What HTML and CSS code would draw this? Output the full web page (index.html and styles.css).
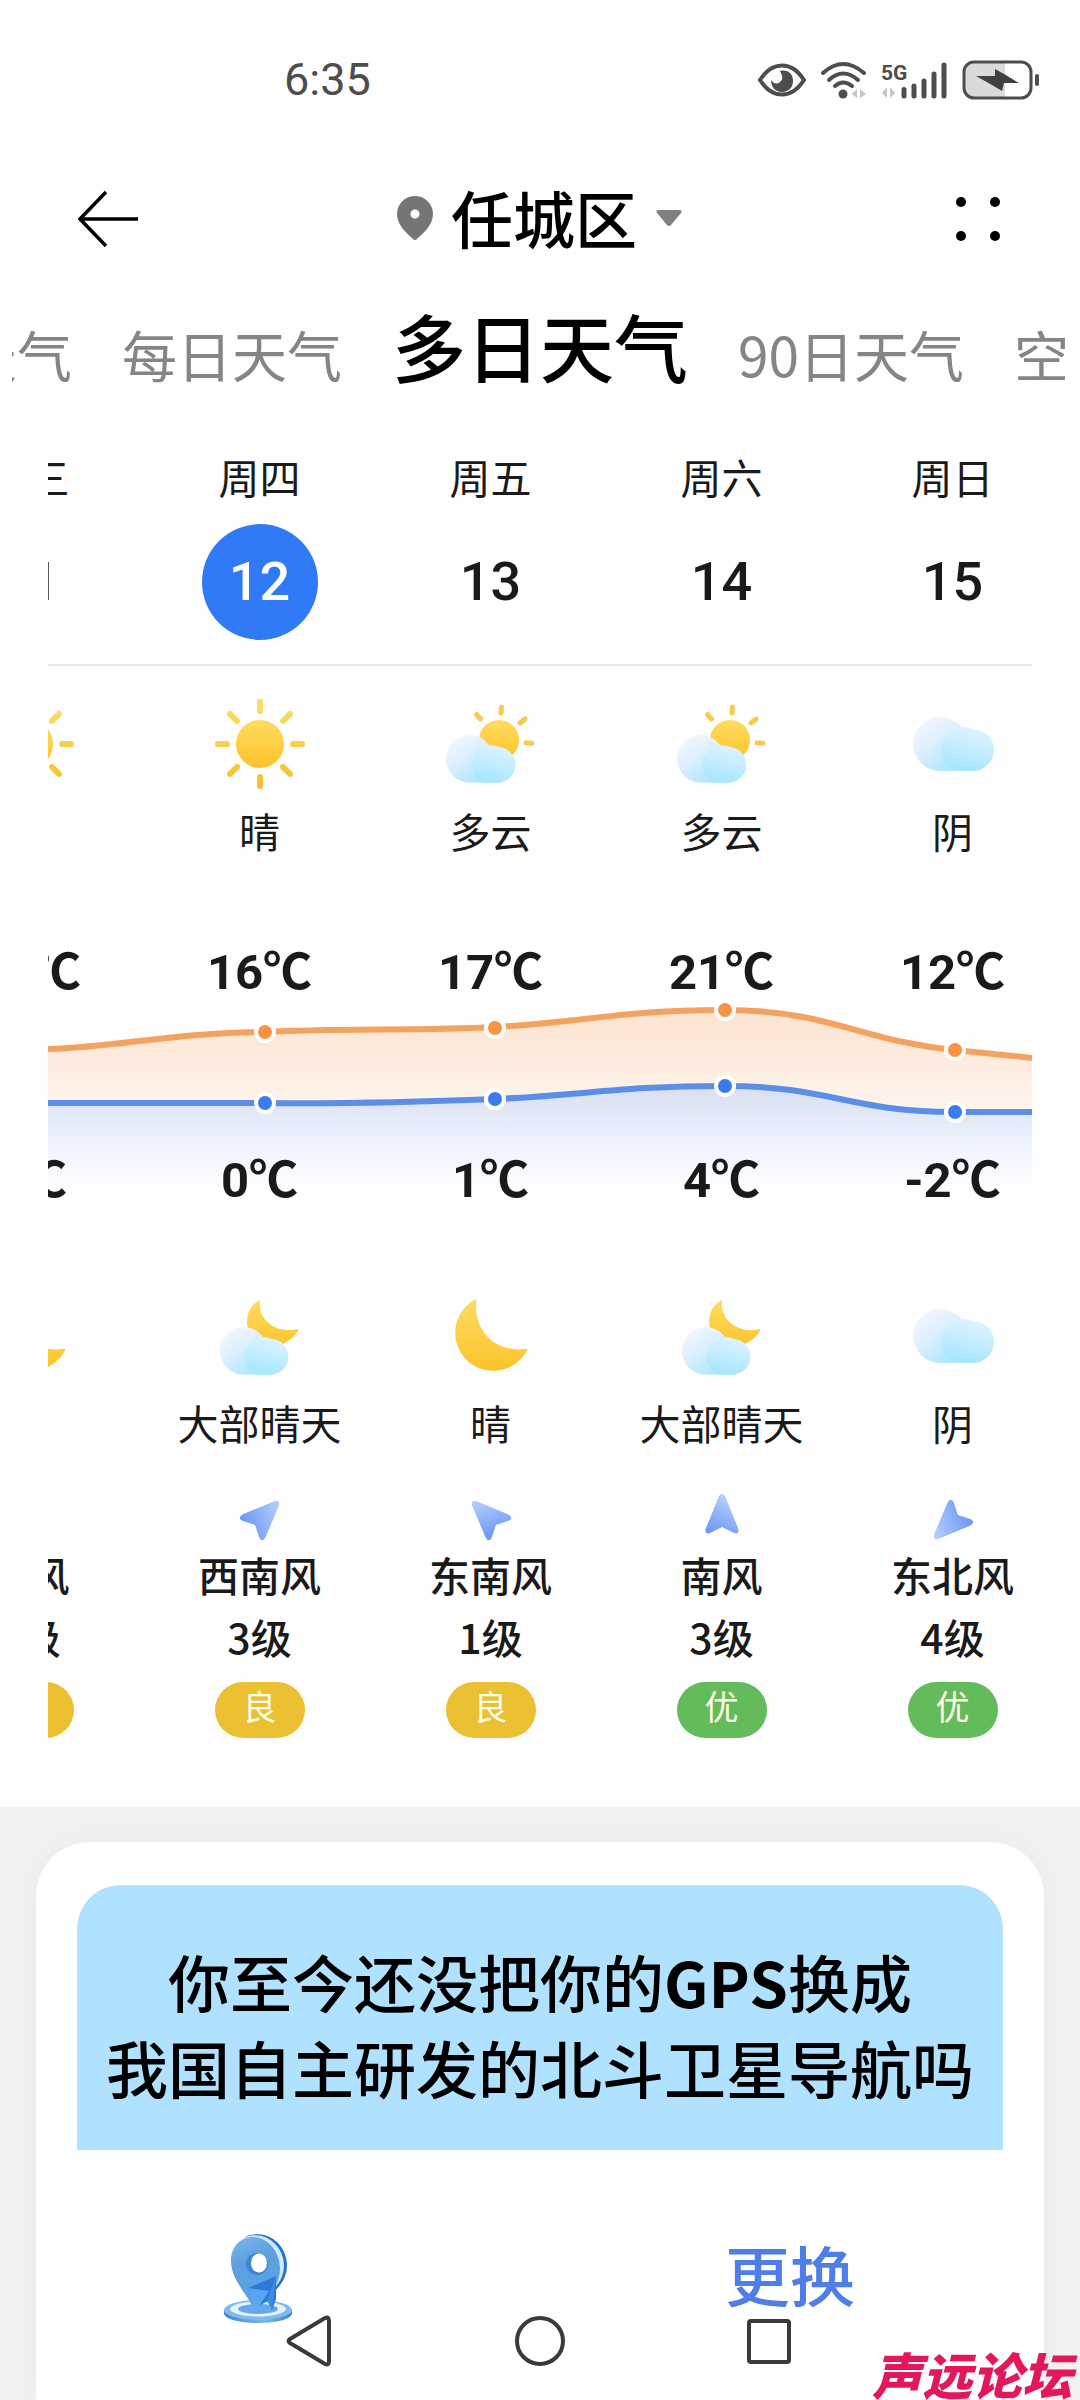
FILE: index.html
```html
<!DOCTYPE html>
<html lang="zh-CN">
<head>
    <meta charset="UTF-8">
    <meta name="viewport" content="width=device-width, initial-scale=1.0">
    <title>多日天气</title>
    <link rel="stylesheet" href="styles.css">
</head>
<body>
    <!-- Ícones reutilizáveis -->
    <svg class="defs" width="0" height="0" aria-hidden="true">
        <defs>
            <linearGradient id="sunFill" gradientUnits="userSpaceOnUse" x1="48" y1="4" x2="48" y2="92">
                <stop offset="0" stop-color="#fbdf6b"/>
                <stop offset="1" stop-color="#f8bf2c"/>
            </linearGradient>
            <linearGradient id="ballFill" x1="0" y1="0" x2="0" y2="1">
                <stop offset="0" stop-color="#fedc60"/>
                <stop offset="1" stop-color="#fcc32b"/>
            </linearGradient>
            <linearGradient id="cloudBig" x1="0.1" y1="0.1" x2="0.8" y2="1">
                <stop offset="0" stop-color="#f3f7ff"/>
                <stop offset="0.4" stop-color="#dceffe"/>
                <stop offset="1" stop-color="#a2e4ff"/>
            </linearGradient>
            <linearGradient id="cloudSmall" x1="0.7" y1="0" x2="0.4" y2="1">
                <stop offset="0" stop-color="#e0f4ff"/>
                <stop offset="1" stop-color="#a6e6ff"/>
            </linearGradient>
            <linearGradient id="windFill" x1="0.7" y1="0" x2="0.3" y2="1">
                <stop offset="0" stop-color="#bcd3fb"/>
                <stop offset="1" stop-color="#6f9af6"/>
            </linearGradient>
        </defs>
        <symbol id="cloud" viewBox="0 0 96 96">
            <path fill="url(#cloudBig)" d="M35 75A27 27 0 1 1 61 40L70 75Z"/>
            <path fill="url(#cloudSmall)" d="M68 33A21 21 0 0 1 68 75H50A21 21 0 0 1 68 33Z"/>
        </symbol>
        <symbol id="sun" viewBox="0 0 96 96">
            <circle cx="48" cy="48" r="24" fill="url(#ballFill)"/>
            <path stroke="url(#sunFill)" stroke-width="6" stroke-linecap="round" d="M48 5.500V15M48.010 81V90M6 48H15M81 48H90M18 18L25 25M78 18L71 25M18 78L25 71M78 78L71 71"/>
        </symbol>
        <symbol id="sun-cloud" viewBox="0 0 96 96">
            <circle cx="56" cy="44" r="20" fill="url(#ballFill)"/>
            <path stroke="#f7cb50" stroke-width="5" stroke-linecap="round" d="M58.500 11L58 17M33.500 18.500L37.500 23M82 23L77 27M83 46.800L89 47.300"/>
            <path fill="url(#cloudBig)" d="M26.500 86.500A23.700 23.700 0 1 1 49 55L58 86.500Z"/>
            <path fill="url(#cloudSmall)" d="M56 51A17.800 17.800 0 0 1 56 86.500H40A18 18 0 0 1 56 51Z"/>
        </symbol>
        <symbol id="moon" viewBox="0 0 96 96">
            <path fill="url(#ballFill)" d="M31 12A38 38 0 1 0 83 64Q86 60 82 61C52 65 30 42 33.500 13Q34 10 31 12Z"/>
        </symbol>
        <symbol id="moon-cloud" viewBox="0 0 96 96">
            <path fill="url(#ballFill)" d="M46 13C35 20 33 32 37 46L58 62L73 55Q82 50 86 43Q87 40 83 41.500C64 45 46 32 48 14Q48 11 46 13Z"/>
            <path fill="url(#cloudBig)" d="M31.500 86.500A23.700 23.700 0 1 1 54 55L62 86.500Z"/>
            <path fill="url(#cloudSmall)" d="M60 51A17.800 17.800 0 0 1 60 86.500H44A18 18 0 0 1 60 51Z"/>
        </symbol>
        <symbol id="arrow" viewBox="0 0 48 48">
            <path fill="url(#windFill)" d="M21 4Q24 0 27 4L40 36Q42 43 36 41L24 35L12 41Q6 43 8 36Z"/>
        </symbol>
    </svg>

    <div class="page">
        <!-- Barra de status -->
        <div class="status-bar">
            <span class="clock">6:35</span>
            <div class="status-icons">
                <svg width="50" height="40" viewBox="0 0 50 40">
                    <path d="M3 20C10 9 17 5.500 25 5.500S40 9 47 20C40 31 33 34.500 25 34.500S10 31 3 20Z" fill="none" stroke="#4d4d4d" stroke-width="4"/>
                    <path d="M23 11C31 9 36 14 36 21C36 28 31 32 25 32C18 32 14 27 14 20C16 23 19 25 23 22C27 19 25 15 23 11Z" fill="#4d4d4d"/>
                </svg>
                <svg width="48" height="40" viewBox="0 0 48 40">
                    <g fill="none" stroke="#4d4d4d" stroke-width="4" stroke-linecap="round">
                        <path d="M3 13Q23 -5 44 13"/>
                        <path d="M9 20Q23 7 38 20"/>
                        <path d="M15 26Q23 19 32 26"/>
                    </g>
                    <circle cx="23" cy="34" r="4.500" fill="#4d4d4d"/>
                    <path d="M32 34L37 29V38ZM46 34L40 38V29Z" fill="#c4c4c4"/>
                </svg>
                <svg width="68" height="40" viewBox="0 0 68 40">
                    <text x="0" y="20" class="net">5G</text>
                    <path d="M1 33L6 27V38ZM14 33L9 38V27Z" fill="#c4c4c4"/>
                    <path d="M23 29.500V36M33 26V36M43 21V36M53 14V36M63 5V36" stroke="#4d4d4d" stroke-width="5" stroke-linecap="round"/>
                </svg>
                <svg width="78" height="40" viewBox="0 0 78 40">
                    <path d="M11 3H43V37H11Q3 37 3 29V11Q3 3 11 3Z" fill="#dadada"/>
                    <rect x="2" y="2" width="67" height="36" rx="10" fill="none" stroke="#4d4d4d" stroke-width="3"/>
                    <path d="M33 9L42 14L57 23H42L40 31L30 25L14 16L33 16Z" fill="#404040"/>
                    <path d="M75 16V24" stroke="#4d4d4d" stroke-width="4" stroke-linecap="round"/>
                </svg>
            </div>
        </div>

        <!-- Cabeçalho -->
        <header class="header">
            <button class="icon-btn" aria-label="返回">
                <svg width="60" height="60" viewBox="0 0 60 60"><path d="M60 30H3M28 3L2 30L28 57" fill="none" stroke="#000" stroke-width="3.500"/></svg>
            </button>
            <button class="place">
                <svg width="36" height="48" viewBox="0 0 36 48"><path fill="#757575" fill-rule="evenodd" d="M18 3A18 18 0 0 0 0 21C0 33 11 41 16 46Q18 48 20 46C25 41 36 33 36 21A18 18 0 0 0 18 3ZM18 16.500A4.500 4.500 0 1 1 18 25.500A4.500 4.500 0 1 1 18 16.500Z"/></svg>
                <h1>任城区</h1>
                <svg width="28" height="20" viewBox="0 0 28 20"><path fill="#808080" d="M4 3H24Q28 3 26 6L16 18Q14 20 12 18L2 6Q0 3 4 3Z"/></svg>
            </button>
            <button class="icon-btn" aria-label="更多">
                <svg width="60" height="48" viewBox="0 0 60 48"><circle cx="19" cy="7" r="5"/><circle cx="53" cy="7" r="5"/><circle cx="19" cy="41" r="5"/><circle cx="53" cy="41" r="5"/></svg>
            </button>
        </header>

        <nav class="tabs">
            <a href="#">天气</a>
            <a href="#">每日天气</a>
            <a href="#" class="active">多日天气</a>
            <a href="#">90日天气</a>
            <a href="#">空气</a>
        </nav>

        <!-- Previsão -->
        <main class="forecast">
            <div class="row dates">
                <div class="day"><span>周三</span><b>11</b></div>
                <div class="day today"><span>周四</span><b>12</b></div>
                <div class="day"><span>周五</span><b>13</b></div>
                <div class="day"><span>周六</span><b>14</b></div>
                <div class="day"><span>周日</span><b>15</b></div>
            </div>

            <div class="row weather">
                <div class="day"><svg><use href="#sun"/></svg><span>晴</span></div>
                <div class="day"><svg><use href="#sun"/></svg><span>晴</span></div>
                <div class="day"><svg><use href="#sun-cloud"/></svg><span>多云</span></div>
                <div class="day"><svg><use href="#sun-cloud"/></svg><span>多云</span></div>
                <div class="day"><svg><use href="#cloud"/></svg><span>阴</span></div>
            </div>

            <!-- Gráfico de temperatura -->
            <div class="temps">
                <svg class="chart" viewBox="0 0 984 268" preserveAspectRatio="none">
                    <defs>
                        <linearGradient id="highArea" gradientUnits="userSpaceOnUse" x1="0" y1="67" x2="0" y2="180">
                            <stop offset="0" stop-color="#fce3d0"/>
                            <stop offset="1" stop-color="#fff7f1"/>
                        </linearGradient>
                        <linearGradient id="lowArea" gradientUnits="userSpaceOnUse" x1="0" y1="143" x2="0" y2="248">
                            <stop offset="0" stop-color="#d8dff0"/>
                            <stop offset="0.500" stop-color="#ecf1fd"/>
                            <stop offset="1" stop-color="#fefefe"/>
                        </linearGradient>
                    </defs>
                    <path fill="url(#highArea)" d="M0 106C70 104 130 89 217 89C290 85 370 88 447 84C540 79 570 67 677 67C782 67 812 98 907 107L984 115V200H0Z"/>
                    <path fill="url(#lowArea)" d="M0 160H217C300 161 370 159 447 156C540 152 570 143 677 143C782 143 802 169 907 169H984V250H0Z"/>
                    <path class="line high" d="M0 106C70 104 130 89 217 89C290 85 370 88 447 84C540 79 570 67 677 67C782 67 812 98 907 107L984 115"/>
                    <path class="line low" d="M0 160H217C300 161 370 159 447 156C540 152 570 143 677 143C782 143 802 169 907 169H984"/>
                    <g class="dot high-dot">
                        <circle cx="217" cy="89" r="9"/>
                        <circle cx="447" cy="85" r="9"/>
                        <circle cx="677" cy="67" r="9"/>
                        <circle cx="907" cy="107" r="9"/>
                    </g>
                    <g class="dot low-dot">
                        <circle cx="217" cy="160" r="9"/>
                        <circle cx="447" cy="156" r="9"/>
                        <circle cx="677" cy="143" r="9"/>
                        <circle cx="907" cy="169" r="9"/>
                    </g>
                </svg>
                <div class="row values">
                    <div class="day"><b>14℃</b><b>0℃</b></div>
                    <div class="day"><b>16℃</b><b>0℃</b></div>
                    <div class="day"><b>17℃</b><b>1℃</b></div>
                    <div class="day"><b>21℃</b><b>4℃</b></div>
                    <div class="day"><b>12℃</b><b>-2℃</b></div>
                </div>
            </div>

            <div class="row weather night">
                <div class="day"><svg><use href="#moon"/></svg><span>晴</span></div>
                <div class="day"><svg><use href="#moon-cloud"/></svg><span>大部晴天</span></div>
                <div class="day"><svg><use href="#moon"/></svg><span>晴</span></div>
                <div class="day"><svg><use href="#moon-cloud"/></svg><span>大部晴天</span></div>
                <div class="day"><svg><use href="#cloud"/></svg><span>阴</span></div>
            </div>

            <div class="row wind">
                <div class="day"><svg><use href="#arrow"/></svg><span>南风</span><span>3级</span><em class="good">良</em></div>
                <div class="day"><svg class="ne"><use href="#arrow"/></svg><span>西南风</span><span>3级</span><em class="good">良</em></div>
                <div class="day"><svg class="nw"><use href="#arrow"/></svg><span>东南风</span><span>1级</span><em class="good">良</em></div>
                <div class="day"><svg><use href="#arrow"/></svg><span>南风</span><span>3级</span><em class="best">优</em></div>
                <div class="day"><svg class="sw"><use href="#arrow"/></svg><span>东北风</span><span>4级</span><em class="best">优</em></div>
            </div>
        </main>

        <!-- Anúncio -->
        <section class="promo">
            <div class="card">
                <p class="banner">你至今还没把你的<strong>GPS</strong>换成<br>我国自主研发的北斗卫星导航吗</p>
                <div class="actions">
                    <svg width="72" height="90" viewBox="0 0 72 90">
                        <defs>
                            <linearGradient id="pinFill" x1="0" y1="0" x2="0.3" y2="1">
                                <stop offset="0" stop-color="#7fb9ee"/>
                                <stop offset="0.4" stop-color="#5e9fde"/>
                                <stop offset="1" stop-color="#5aa2ea"/>
                            </linearGradient>
                            <linearGradient id="baseFill" x1="0" y1="0" x2="1" y2="0">
                                <stop offset="0" stop-color="#4386cf"/>
                                <stop offset="0.6" stop-color="#79b6ef"/>
                                <stop offset="1" stop-color="#4183ca"/>
                            </linearGradient>
                        </defs>
                        <path fill="url(#baseFill)" d="M1 77V81C5 93 65 93 69 81V77Z"/>
                        <ellipse cx="35" cy="77" rx="34" ry="10" fill="#82b9ec"/>
                        <ellipse cx="35" cy="76" rx="28" ry="7.500" fill="#e3f2fd"/>
                        <ellipse cx="35" cy="76" rx="20" ry="5" fill="#66a8ea"/>
                        <path fill="#2473cf" d="M22 4C42 -5 63 9 64 32C64 44 58 52 50 60L46 62Z"/>
                        <path fill="#cdeafe" d="M22 4C42 -3 60 12 61 32C61 44 55 52 47 60Z"/>
                        <path fill="url(#pinFill)" d="M30 4C17 4 8 14 8 28C8 45 21 58 29 72L38 74C44 64 57 52 57 36C57 18 44 4 30 4Z"/>
                        <ellipse cx="34" cy="31" rx="11" ry="11" fill="#3f86d2"/>
                        <ellipse cx="36" cy="30" rx="8" ry="9.500" fill="#fff"/>
                        <path fill="#2d79d9" d="M25 55L53 43V66L49 77L45 68L37 72H29Z"/>
                        <path fill="#5ba4ee" d="M25 55L46 58L37 72H29Z"/>
                        <path fill="#3f8ce5" d="M53 42L49 77L44 68Z"/>
                    </svg>
                    <button class="swap">更换</button>
                </div>
            </div>
        </section>
    </div>

    <!-- Navegação do sistema -->
    <div class="sys-nav">
        <button aria-label="后退"><svg viewBox="0 0 52 52"><path d="M6 24L41 3Q45 1 45 6V46Q45 51 41 49L6 28Q3 26 6 24Z"/></svg></button>
        <button aria-label="主页"><svg viewBox="0 0 52 52"><circle cx="26" cy="26" r="23"/></svg></button>
        <button aria-label="最近任务"><svg viewBox="0 0 52 52"><rect x="5" y="6" width="40" height="41" rx="2"/></svg></button>
    </div>
    <div class="watermark">声远论坛</div>
</body>
</html>
```

FILE: styles.css
```css
* {
    box-sizing: border-box;
}
body {
    margin: 0;
    font-family: "Noto Sans CJK SC", sans-serif;
    font-size: 41px;
    line-height: 56px;
    color: #1a1a1a;
    background: #fefefe;
}
h1, p {
    margin: 0;
}
svg {
    display: block;
    flex: none;
}
button {
    padding: 0;
    border: none;
    background: none;
    font-family: inherit;
    color: inherit;
    cursor: pointer;
}
.clock, .net, .day b {
    font-family: Roboto, "Noto Sans CJK SC", sans-serif;
}
.defs {
    position: absolute;
}
.page {
    display: flex;
    flex-direction: column;
    min-height: 100vh;
    overflow: hidden;
}

/* Barra de status */
.status-bar {
    display: flex;
    justify-content: space-between;
    align-items: center;
    height: 160px;
    padding: 0 40px 0 284px;
}
.clock {
    font-size: 45px;
    color: #4d4d4d;
}
.status-icons {
    display: flex;
    gap: 13px;
}
.net {
    font-size: 21px;
    font-weight: bold;
    fill: #4d4d4d;
}

/* Cabeçalho */
.header {
    display: flex;
    justify-content: space-between;
    align-items: center;
    height: 118px;
    padding: 0 78px;
}
.place {
    display: flex;
    align-items: center;
    gap: 18px;
    padding-bottom: 4px;
}
.place h1 {
    font-size: 62px;
    font-weight: 500;
    line-height: 72px;
    color: #000;
}
.tabs {
    display: flex;
    justify-content: center;
    align-items: baseline;
    gap: 50px;
    margin: 0 12px;
    padding-left: 6px;
    overflow: hidden;
    white-space: nowrap;
}
.tabs a {
    flex: none;
    font-size: 55px;
    line-height: 72px;
    color: #858585;
    text-decoration: none;
}
.tabs .active {
    font-size: 74px;
    font-weight: 500;
    line-height: 134px;
    color: #000;
}

/* Previsão */
.forecast {
    margin: 0 48px;
    padding: 36px 0 69px;
    overflow: hidden;
}
.row {
    display: flex;
}
.day {
    flex: 0 0 231px;
    display: flex;
    flex-direction: column;
    align-items: center;
    white-space: nowrap;
}
.day:first-child {
    margin-left: -135px;
}
.dates {
    padding-bottom: 24px;
    border-bottom: 2px solid #e8e8e8;
}
.dates b {
    width: 116px;
    margin-top: 20px;
    border-radius: 50%;
    font-size: 54px;
    font-weight: 500;
    line-height: 116px;
    text-align: center;
}
.today b {
    background: #317af7;
    color: #fff;
}
.weather {
    padding-top: 30px;
}
.weather svg {
    width: 96px;
    height: 96px;
    margin-bottom: 10px;
}
.night {
    padding-top: 77px;
}
.temps {
    display: grid;
    grid-template-columns: minmax(0, 1fr);
    margin-top: 85px;
}
.chart, .values {
    grid-area: 1 / 1;
}
.chart {
    width: 100%;
    height: 268px;
}
.values .day {
    justify-content: space-between;
}
.values b {
    font-size: 49px;
    line-height: 60px;
}
.line {
    fill: none;
    stroke-width: 6;
}
.high {
    stroke: #f4a25f;
}
.low {
    stroke: #5b8ee8;
}
.dot {
    stroke: #fff;
    stroke-width: 4;
}
.high-dot {
    fill: #f99341;
}
.low-dot {
    fill: #3b7bf0;
}
.wind {
    padding-top: 42px;
    font-weight: 500;
}
.wind .day {
    gap: 6px;
}
.wind svg {
    width: 48px;
    height: 48px;
    transform-origin: 24px 28px;
}
.ne {
    transform: rotate(45deg);
}
.nw {
    transform: rotate(-45deg);
}
.sw {
    transform: rotate(225deg);
}
.wind em {
    width: 90px;
    margin-top: 12px;
    padding-bottom: 8px;
    border-radius: 28px;
    font-size: 34px;
    font-style: normal;
    font-weight: 400;
    line-height: 48px;
    text-align: center;
    color: #fffde8;
}
.good {
    background: #ebc032;
}
.best {
    background: #64bb5c;
}

/* Anúncio */
.promo {
    flex: 1;
    display: flex;
    padding: 35px 36px 0;
    background: #f1f2f4;
}
.card {
    flex: 1;
    padding: 43px 41px 0;
    border-radius: 54px 54px 0 0;
    background: #fff;
    box-shadow: 0 0 30px rgba(0, 0, 0, 0.04);
}
.banner {
    padding: 53px 0 40px;
    border-radius: 44px 44px 0 0;
    background: #b0e2ff;
    font-size: 62px;
    font-weight: 500;
    line-height: 86px;
    text-align: center;
    white-space: nowrap;
    color: #000;
}
.actions {
    display: flex;
    justify-content: space-between;
    align-items: flex-start;
    padding: 83px 148px 0 146px;
}
.swap {
    font-size: 65px;
    font-weight: 500;
    line-height: 80px;
    color: #4f7de9;
}

/* Navegação do sistema */
.sys-nav {
    position: fixed;
    left: 0;
    right: 0;
    bottom: 33px;
    display: flex;
    justify-content: center;
    gap: 178px;
}
.sys-nav svg {
    width: 52px;
    height: 52px;
    fill: none;
    stroke: #3a3a3a;
    stroke-width: 4;
}
.watermark {
    position: fixed;
    right: 8px;
    bottom: 0;
    font-size: 50px;
    font-style: italic;
    font-weight: 900;
    line-height: 54px;
    color: #e3175a;
}
```
